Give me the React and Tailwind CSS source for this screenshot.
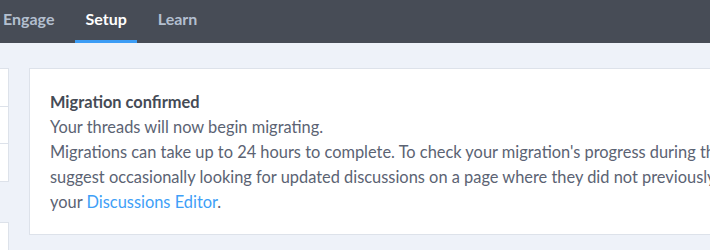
import React from "react";

const tabs = ["Engage", "Setup", "Learn"];

const App = () => {
  return (
    <div className="w-[710px] h-[250px] overflow-hidden bg-[#eef2f9] font-['Lato','Open_Sans',sans-serif]">
      <nav className="h-[43px] bg-[#474c56] flex items-stretch pl-[3px] gap-[31px]">
        {tabs.map((t) => (
          <div
            key={t}
            className={
              t === "Setup"
                ? "flex items-center text-[16px] font-bold text-white border-b-[3px] border-[#3b9cf5] px-[10px] -mx-[10px] pb-[3px]"
                : "flex items-center text-[16px] font-bold text-[#b3bfcf] pb-[6px]"
            }
          >
            {t}
          </div>
        ))}
      </nav>

      <div className="flex items-start pt-[25px] gap-[20px]">
        <div className="w-[9px] shrink-0 flex flex-col gap-[40px]">
          <div className="bg-white border-y border-r border-[#dde2ea]">
            <div className="h-[38px] border-b border-[#dde2ea]" />
            <div className="h-[37px] border-b border-[#dde2ea]" />
            <div className="h-[37px]" />
          </div>
          <div className="bg-white border-y border-r border-[#dde2ea] h-[40px]" />
        </div>

        <div className="bg-white border border-[#dde2ea] w-[720px] shrink-0 pl-[20px] pt-[20px] pb-[20px] text-[16.4px] leading-[25px] text-[#5b6373] whitespace-nowrap">
          <div className="font-bold text-[#454b56]">Migration confirmed</div>
          <div>Your threads will now begin migrating.</div>
          <div>Migrations can take up to 24 hours to complete. To check your migration's progress during that time, we</div>
          <div>suggest occasionally looking for updated discussions on a page where they did not previously appear in</div>
          <div>
            your <span className="text-[#3ea0f7]">Discussions Editor</span>.
          </div>
        </div>
      </div>
    </div>
  );
};

export default App;
